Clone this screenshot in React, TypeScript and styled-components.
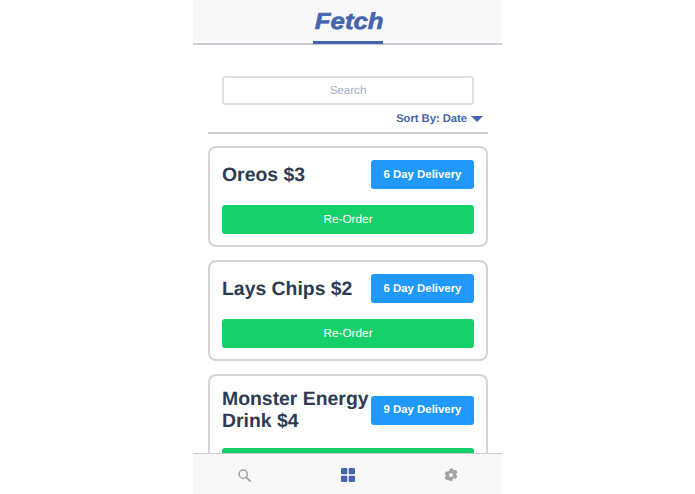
import React from 'react';
import styled, { createGlobalStyle } from 'styled-components';

const GlobalStyle = createGlobalStyle`
  html, body {
    margin: 0;
    padding: 0;
    height: 100%;
    background: #fff;
    font-family: "Liberation Sans", Arial, sans-serif;
    text-rendering: geometricPrecision;
  }
`;

const Phone = styled.div`
  width: 309px;
  height: 494px;
  margin-left: 193px;
  display: flex;
  flex-direction: column;
  overflow: hidden;
  background: #fff;
`;

const Header = styled.header`
  flex: none;
  height: 43px;
  background: #f8f8f8;
  border-bottom: 2px solid #c9ccd3;
  display: flex;
  justify-content: center;
`;

const Logo = styled.div`
  flex: none;
  width: 70px;
  height: 44px;
  box-sizing: border-box;
  border-bottom: 3px solid #4464ad;
  text-align: center;
`;

const LogoText = styled.span`
  display: inline-block;
  font-size: 23px;
  line-height: 43px;
  font-weight: 700;
  font-style: italic;
  color: #4464ad;
  -webkit-text-stroke: 0.6px #4464ad;
  transform: translateX(1.5px) scaleX(1.12);
`;

const Content = styled.main`
  flex: 1;
  min-height: 0;
  overflow: hidden;
  padding: 31px 14px 0 15px;
`;

const SearchBox = styled.input`
  display: block;
  box-sizing: border-box;
  width: 252px;
  height: 29px;
  margin: 0 0 0 14px;
  border: 2px solid #dde1ea;
  border-radius: 3px;
  background: #fff;
  text-align: center;
  font-family: inherit;
  font-size: 11.6px;
  padding: 0;
  outline: none;
  text-rendering: geometricPrecision;
  &::placeholder {
    color: #a3aec2;
    opacity: 1;
  }
`;

const SortRow = styled.div`
  display: flex;
  justify-content: flex-end;
  align-items: center;
  gap: 4px;
  height: 29px;
  padding-right: 5px;
  border-bottom: 2px solid #c9ccd3;
  box-sizing: border-box;
  margin-bottom: 12px;
  font-size: 11.2px;
  font-weight: 700;
  color: #4464ad;
`;

const Caret = styled.span`
  width: 0;
  height: 0;
  border-left: 6px solid transparent;
  border-right: 6px solid transparent;
  border-top: 6px solid #4464ad;
`;

const Card = styled.section`
  box-sizing: border-box;
  border: 2px solid #d5d5d8;
  border-radius: 8px;
  padding: 12px 12px 11px;
  margin-bottom: 13px;
  background: #fff;
`;

const CardTop = styled.div`
  display: flex;
  justify-content: space-between;
  align-items: center;
  min-height: 29px;
  margin-bottom: 16px;
`;

const Title = styled.h2`
  margin: 0;
  flex: 1;
  min-width: 0;
  font-size: 19.4px;
  line-height: 22px;
  font-weight: 700;
  color: #2d3b52;
`;

const Badge = styled.div`
  flex: none;
  width: 103px;
  height: 29px;
  box-sizing: border-box;
  border-radius: 3px;
  background: #2199fb;
  color: #fff;
  font-size: 11.4px;
  font-weight: 700;
  display: flex;
  align-items: center;
  justify-content: center;
`;

const ReorderButton = styled.button`
  display: block;
  width: 100%;
  height: 29px;
  border: none;
  border-radius: 3px;
  background: #16d16a;
  color: #fff;
  font-family: inherit;
  font-size: 11.8px;
  padding: 0 0 1px;
  text-rendering: geometricPrecision;
`;

const BottomNav = styled.nav`
  flex: none;
  height: 41px;
  box-sizing: border-box;
  padding-top: 2px;
  background: #f8f8f8;
  border-top: 1px solid #c9ccd3;
  display: grid;
  grid-template-columns: repeat(3, 1fr);
  align-items: center;
  justify-items: center;
`;

const NavIcon = styled.svg<{ $tone: string }>`
  display: block;
  fill: ${(p) => p.$tone};
`;

const orders = [
  { name: 'Oreos $3', days: 6 },
  { name: 'Lays Chips $2', days: 6 },
  { name: 'Monster Energy Drink $4', days: 9 },
];

export default function App() {
  return (
    <Phone>
      <GlobalStyle />
      <Header>
        <Logo>
          <LogoText>Fetch</LogoText>
        </Logo>
      </Header>
      <Content>
        <SearchBox placeholder="Search" />
        <SortRow>
          Sort By: Date <Caret />
        </SortRow>
        {orders.map((order) => (
          <Card key={order.name}>
            <CardTop>
              <Title>{order.name}</Title>
              <Badge>{order.days} Day Delivery</Badge>
            </CardTop>
            <ReorderButton>Re-Order</ReorderButton>
          </Card>
        ))}
      </Content>
      <BottomNav>
        <NavIcon $tone="none" width="13" height="13" viewBox="0 0 14 14">
          <circle cx="5.6" cy="5.6" r="4.4" fill="none" stroke="#a2a2a2" strokeWidth="1.6" />
          <path d="M9 9 L13 13" stroke="#a2a2a2" strokeWidth="2" strokeLinecap="round" />
        </NavIcon>
        <NavIcon $tone="#4464ad" width="14" height="14" viewBox="0 0 14 14">
          <rect x="0" y="0" width="6.3" height="6.3" rx="1.2" />
          <rect x="7.7" y="0" width="6.3" height="6.3" rx="1.2" />
          <rect x="0" y="7.7" width="6.3" height="6.3" rx="1.2" />
          <rect x="7.7" y="7.7" width="6.3" height="6.3" rx="1.2" />
        </NavIcon>
        <NavIcon $tone="#a2a2a2" width="14" height="14" viewBox="1.500 1.500 21 21">
          <path
            fillRule="evenodd"
            d="M14.4 1.500l.6 2.600c.6.200 1.200.500 1.700.900l2.600-.8 2.400 4.100-2 1.800c.1.600.1 1.200 0 1.800l2 1.800-2.400 4.100-2.600-.8c-.5.400-1.100.7-1.700.9l-.6 2.600H9.600L9 19.900c-.6-.2-1.200-.5-1.700-.9l-2.600.8-2.400-4.100 2-1.800c-.1-.6-.1-1.200 0-1.800l-2-1.800 2.400-4.100 2.600.8c.5-.4 1.100-.7 1.700-.9l.6-2.600zM12 9a3 3 0 1 0 0 6 3 3 0 0 0 0-6z"
          />
        </NavIcon>
      </BottomNav>
    </Phone>
  );
}
